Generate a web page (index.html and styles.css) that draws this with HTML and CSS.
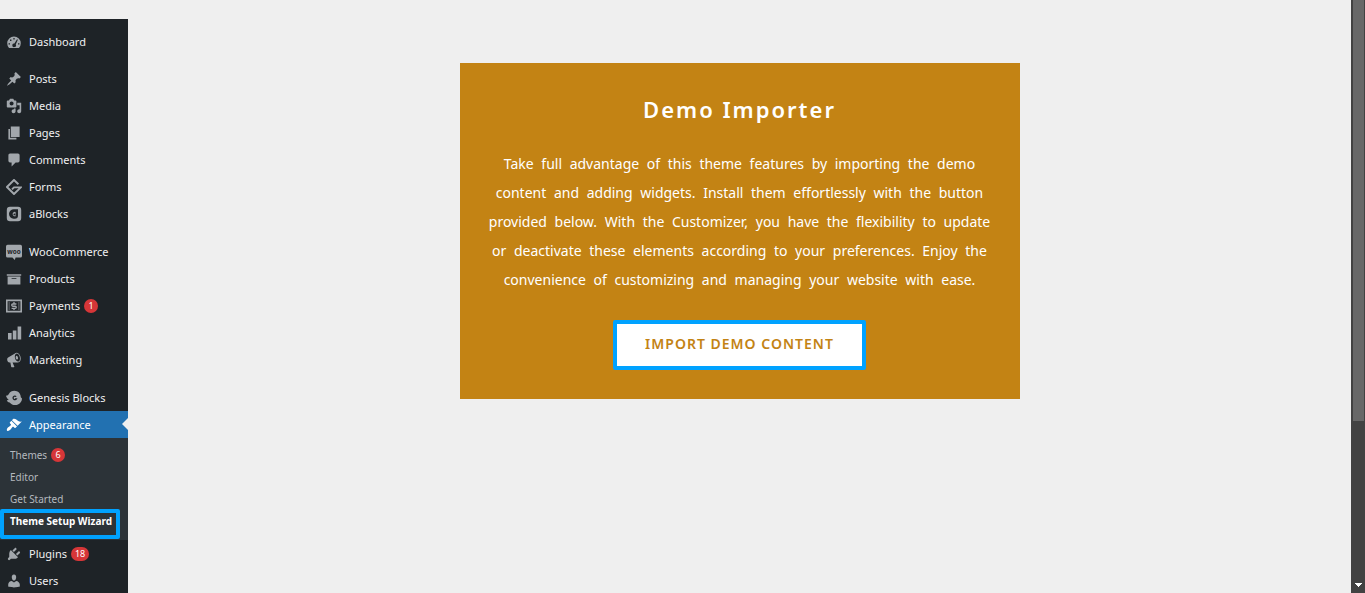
FILE: index.html
```html
<!DOCTYPE html>
<html lang="en">
<head>
<meta charset="utf-8">
<title>Theme Setup Wizard</title>
<link rel="stylesheet" href="styles.css">
</head>
<body>
<div class="shell">
  <nav class="sidebar" aria-label="Main menu">
    <ul class="menu-group top">
      <li><a class="menu-link" href="#"><svg class="icon" viewBox="0 0 20 20"><path d="M3.800 17.500A8.500 8.500 0 1 1 16.200 17.500Z"/><path class="cut" d="M9.200 5h1.600v1.800H9.200zM5 7h1.800v1.800H5zM3.200 11.500h1.800v1.600H3.200zM15 11.500h1.800v1.600H15zM13.800 6.500l1 .6-2.600 6a2.300 2.300 0 1 1-1.700-1.200z"/></svg>Dashboard</a></li>
    </ul>
    <ul class="menu-group">
      <li><a class="menu-link" href="#"><svg class="icon" viewBox="0 0 20 20"><path d="M10.440 3.020l1.820-1.820 6.360 6.350-1.830 1.820c-1.050-.68-2.480-.57-3.410.36l-.75.75c-.92.93-1.040 2.350-.35 3.410l-1.830 1.820-2.410-2.410-2.800 2.790c-.42.42-3.380 2.710-3.800 2.290s1.860-3.390 2.280-3.810l2.790-2.790L4.100 9.360l1.830-1.820c1.050.69 2.480.57 3.400-.36l.75-.75c.93-.92 1.050-2.350.36-3.410z"/></svg>Posts</a></li>
      <li><a class="menu-link" href="#"><svg class="icon" viewBox="0 0 20 20"><path fill-rule="evenodd" d="M13 11V4c0-.55-.45-1-1-1h-1.670L9 1H5L3.670 3H2c-.55 0-1 .45-1 1v7c0 .55.45 1 1 1h10c.55 0 1-.45 1-1zM7 4.500c1.380 0 2.500 1.120 2.500 2.500S8.380 9.500 7 9.500 4.500 8.380 4.500 7 5.620 4.500 7 4.500zM14 6h5v10.500c0 1.380-1.120 2.500-2.500 2.500S14 17.880 14 16.500s1.120-2.500 2.500-2.500c.17 0 .34.02.5.05V9h-3V6zm-4 8.050V13h2v3.500c0 1.380-1.120 2.500-2.500 2.500S7 17.880 7 16.500 8.120 14 9.500 14c.17 0 .34.02.5.05z"/></svg>Media</a></li>
      <li><a class="menu-link" href="#"><svg class="icon" viewBox="0 0 20 20"><path d="M6 15V2h11v13H6zm-1 1h8v2H3V5h2v11z"/></svg>Pages</a></li>
      <li><a class="menu-link" href="#"><svg class="icon" viewBox="0 0 20 20"><path d="M5 2h10c1.100 0 2 .9 2 2v7c0 1.100-.9 2-2 2h-3l-5 5v-5H5c-1.100 0-2-.9-2-2V4c0-1.100.9-2 2-2z"/></svg>Comments</a></li>
      <li><a class="menu-link" href="#"><svg class="icon" viewBox="0 0 20 20"><path d="M15.500 6.500 10 1.200 1.200 10l8.800 8.800 8.500-8.300H10l-2.500 2.500" fill="none" stroke="currentColor" stroke-width="2.400"/></svg>Forms</a></li>
      <li><a class="menu-link" href="#"><svg class="icon" viewBox="0 0 20 20"><rect x="1" y="1" width="18" height="18" rx="4"/><path class="cut" d="M15 4v8a4 4 0 0 1-4 4h-1.500A5.500 5.500 0 0 1 10 4z"/><path d="M12 7.500v5.300a2.800 2.800 0 1 1 0-5.300z"/><circle class="cut" cx="10.500" cy="10.500" r="1.200"/></svg>aBlocks</a></li>
    </ul>
    <ul class="menu-group">
      <li><a class="menu-link" href="#"><svg class="icon" viewBox="0 0 20 20"><path d="M2 1h16q2 0 2 2v12q0 2-2 2h-6l-1 3-3-3H2q-2 0-2-2V3q0-2 2-2z"/><text class="cut woo" x="10" y="12" text-anchor="middle">woo</text></svg>WooCommerce</a></li>
      <li><a class="menu-link" href="#"><svg class="icon" viewBox="0 0 20 20"><path fill-rule="evenodd" d="M19 4v2H1V4h18zM2 7h16v10H2V7zm11 3V9H7v1h6z"/></svg>Products</a></li>
      <li><a class="menu-link" href="#"><svg class="icon" viewBox="0 0 20 20"><path d="M1 3h18v14H1z" fill="none" stroke="currentColor" stroke-width="2"/><path d="M3 5h2v10H3zM15 5h2v10h-2z" opacity=".35"/><path d="M13 7.500H8.500a1 1 0 0 0 0 2.800h3a1 1 0 0 1 0 2.700H7M10 5v2.500M10 13v2" fill="none" stroke="currentColor" stroke-width="1.600"/></svg>Payments<span class="badge">1</span></a></li>
      <li><a class="menu-link" href="#"><svg class="icon" viewBox="0 0 20 20"><path d="M19 18V2h-4.500v16H19zm-6 0V7H8.500v11H13zm-6 0v-8H2.500v8H7z"/></svg>Analytics</a></li>
      <li><a class="menu-link" href="#"><svg class="icon" viewBox="0 0 20 20"><path fill-rule="evenodd" d="M18.150 5.940c.46 1.620.38 3.220-.02 4.480-.42 1.280-1.260 2.180-2.300 2.480-.16.06-.26.06-.4.06-.06.02-.12.02-.18.02-.06.02-.14.02-.22.02h-6.800l2.220 5.500c.02.14-.06.26-.14.34-.08.1-.24.16-.34.16H6.950c-.1 0-.26-.06-.34-.16-.08-.08-.16-.2-.14-.34l-1-5.500H4.250l-.02-.02c-.5.06-1.080-.18-1.540-.62s-.88-1.080-1.060-1.880c-.24-.8-.2-1.560-.02-2.200.18-.62.58-1.080 1.060-1.300l.02-.02 9-5.400c.1-.06.18-.1.24-.16.06-.04.14-.08.24-.12.16-.08.28-.12.5-.18 1.040-.3 2.240.1 3.220.98s1.840 2.240 2.260 3.860zm-2.580 5.980h-.02c.4-.1.74-.34 1.040-.7.58-.7.86-1.760.86-3.040 0-.64-.1-1.300-.28-1.980-.34-1.360-1.020-2.500-1.780-3.240s-1.680-1.100-2.460-.88c-.82.22-1.400.96-1.700 2-.32 1.040-.28 2.360.06 3.720.38 1.360 1 2.500 1.800 3.240.78.74 1.620 1.100 2.480.88zm-2.540-7.080c.22-.04.42-.02.62.04.38.16.76.48 1.020 1s.42 1.200.42 1.780c0 .3-.04.56-.12.8-.18.48-.44.84-.86.94-.34.1-.8-.06-1.140-.4s-.64-.86-.78-1.500c-.18-.62-.12-1.240.02-1.720s.48-.84.82-.94z"/></svg>Marketing</a></li>
    </ul>
    <ul class="menu-group">
      <li><a class="menu-link" href="#"><svg class="icon" viewBox="0 0 20 20"><path d="M0 7c1.500.3 2.500-.2 3.500-2C5 2.500 7.500 1 10.500 1c4.500 0 8 3.500 8 8l1.500 1.500c0 3.500-2 6-5 7.500-4 1.500-8 .5-10.500-2.500-2-.2-3-1.200-3.500-2.800l2.500-.2C1.500 11 .3 9 0 7z"/><path class="cut-line" d="M12.700 8.300a2.200 2.200 0 1 0 .2 2.700h-1.700"/></svg>Genesis Blocks</a></li>
      <li>
        <a class="menu-link open" href="#"><svg class="icon" viewBox="0 0 20 20"><path d="M14.480 11.060L7.410 3.990l1.500-1.500c.5-.56 2.300-.47 3.510.32 1.210.8 1.430 1.280 2.910 2.100 1.180.64 2.450 1.260 4.450.85zm-.71.71L6.700 4.700 4.930 6.470c-.39.39-.39 1.020 0 1.410l1.060 1.060c.39.39.39 1.030 0 1.420-.6.6-1.430 1.110-2.210 1.690-.35.26-.7.53-1.010.84C1.430 14.230.4 16.080 1.400 17.070c.99 1 2.840-.03 4.180-1.360.31-.31.58-.66.85-1.020.57-.78 1.080-1.610 1.690-2.210.39-.39 1.020-.39 1.410 0l1.060 1.060c.39.39 1.020.39 1.410 0z"/></svg>Appearance</a>
        <ul class="submenu">
          <li><a class="sub-link" href="#">Themes<span class="badge">6</span></a></li>
          <li><a class="sub-link" href="#">Editor</a></li>
          <li><a class="sub-link" href="#">Get Started</a></li>
          <li><a class="sub-link current" href="#" aria-current="page">Theme Setup Wizard</a></li>
        </ul>
      </li>
      <li><a class="menu-link" href="#"><svg class="icon" viewBox="0 0 20 20"><path d="M13.110 4.360L9.870 7.600 8 5.730l3.240-3.240c.35-.34 1.050-.2 1.560.32.52.51.66 1.210.31 1.550zm-8 1.770l.91-1.120 9.010 9.010-1.190.84c-.71.71-2.630 1.160-3.820 1.160H6.140L4.900 17.260c-.59.59-1.540.59-2.120 0-.59-.58-.59-1.530 0-2.120l1.240-1.240v-3.880c0-1.130.4-3.190 1.090-3.890zm7.260 3.970l3.240-3.240c.34-.35 1.040-.21 1.550.31.52.51.66 1.210.31 1.550l-3.240 3.250z"/></svg>Plugins<span class="badge">18</span></a></li>
      <li><a class="menu-link" href="#"><svg class="icon" viewBox="0 0 20 20"><path d="M10 9.250c-2.270 0-2.730-3.440-2.730-3.440C7 4.020 7.820 2 9.970 2c2.160 0 2.980 2.020 2.710 3.810 0 0-.41 3.440-2.680 3.440zm0 2.570L12.720 10c2.390 0 4.520 2.330 4.520 4.530v2.490s-3.650 1.130-7.240 1.130c-3.650 0-7.240-1.130-7.240-1.130v-2.490c0-2.250 1.940-4.480 4.470-4.480z"/></svg>Users</a></li>
    </ul>
  </nav>
  <main class="content">
    <section class="card">
      <h1 class="card-title">Demo Importer</h1>
      <p class="card-text">Take full advantage of this theme features by importing the demo content and adding widgets. Install them effortlessly with the button provided below. With the Customizer, you have the flexibility to update or deactivate these elements according to your preferences. Enjoy the convenience of customizing and managing your website with ease.</p>
      <button class="import-button" type="button">IMPORT DEMO CONTENT</button>
    </section>
  </main>
  <div class="scrollbar" aria-hidden="true">
    <div class="thumb"></div>
    <svg class="arrow" viewBox="0 0 7 4"><path d="M0 0h7v1H6v1H5v1H4v1H3V3H2V2H1V1H0z"/></svg>
  </div>
</div>
</body>
</html>
```
FILE: styles.css
```css
* {
  box-sizing: border-box;
}

body {
  margin: 0;
  background: #efefef;
  font-family: "Noto Sans", "Open Sans", sans-serif;
}

.shell {
  display: flex;
  height: 100vh;
  overflow: hidden;
}

ul {
  margin: 0;
  padding: 0;
  list-style: none;
}

.sidebar {
  flex: 0 0 128px;
  margin-top: 19px;
  padding-top: 9px;
  background: #1e2327;
  font-size: 11px;
}

.menu-group {
  margin-bottom: 11px;
}

.menu-group.top {
  margin-bottom: 10px;
}

.menu-link {
  position: relative;
  display: flex;
  align-items: center;
  height: 27px;
  padding-left: 6px;
  color: #f0f0f1;
  text-decoration: none;
  white-space: nowrap;
}

.icon {
  width: 16px;
  height: 16px;
  margin-right: 7px;
  color: #a2a7ac;
  fill: currentColor;
}

.icon .cut {
  fill: #1e2327;
}

.icon .cut-line {
  fill: none;
  stroke: #1e2327;
  stroke-width: 1.6;
}

.woo {
  font-size: 8px;
  font-weight: 700;
}

.badge {
  min-width: 14px;
  height: 14px;
  margin-left: 4px;
  padding: 0 4px;
  border-radius: 7px;
  background: #d63638;
  color: #ffffff;
  font-size: 9px;
  line-height: 14px;
  text-align: center;
}

.open {
  background: #2271b1;
  color: #ffffff;
}

.open .icon {
  color: #ffffff;
}

.open::after {
  content: "";
  position: absolute;
  right: 0;
  top: 7px;
  border: 6px solid transparent;
  border-left-width: 0;
  border-right-color: #efefef;
}

.submenu {
  padding: 6px 0 8px;
  background: #2c3338;
}

.sub-link {
  position: relative;
  display: flex;
  align-items: center;
  height: 22px;
  padding-left: 10px;
  color: #b4b9be;
  font-size: 10px;
  text-decoration: none;
  white-space: nowrap;
}

.current {
  color: #ffffff;
  font-weight: 700;
}

.current::after {
  content: "";
  position: absolute;
  inset: -1px 8px -7px 0;
  border: 4px solid #00a2ff;
  border-radius: 2px;
}

.content {
  flex: 1;
  padding: 63px 24px 24px;
}

.card {
  max-width: 560px;
  margin: 0 auto;
  padding: 30px 24px 29px;
  background: #c38314;
  color: #ffffff;
  text-align: center;
}

.card-title {
  margin: 0 0 24px;
  font-size: 22px;
  font-weight: 600;
  line-height: 32px;
  letter-spacing: 2px;
}

.card-text {
  margin: 0 0 26px;
  font-size: 14px;
  line-height: 29px;
  word-spacing: 4px;
}

.import-button {
  height: 50px;
  padding: 0 28px 4px;
  border: 4px solid #00a2ff;
  border-radius: 2px;
  background: #ffffff;
  color: #c38314;
  font-family: inherit;
  font-size: 14px;
  font-weight: 600;
  letter-spacing: 1px;
}

.scrollbar {
  display: flex;
  flex: 0 0 14px;
  flex-direction: column;
  align-items: center;
  justify-content: space-between;
  padding: 0 1px 0 2px;
  background: #424242;
}

.thumb {
  width: 100%;
  height: 71%;
  background: #686868;
}

.arrow {
  width: 7px;
  height: 4px;
  margin-bottom: 6px;
  fill: #ffffff;
}
```
